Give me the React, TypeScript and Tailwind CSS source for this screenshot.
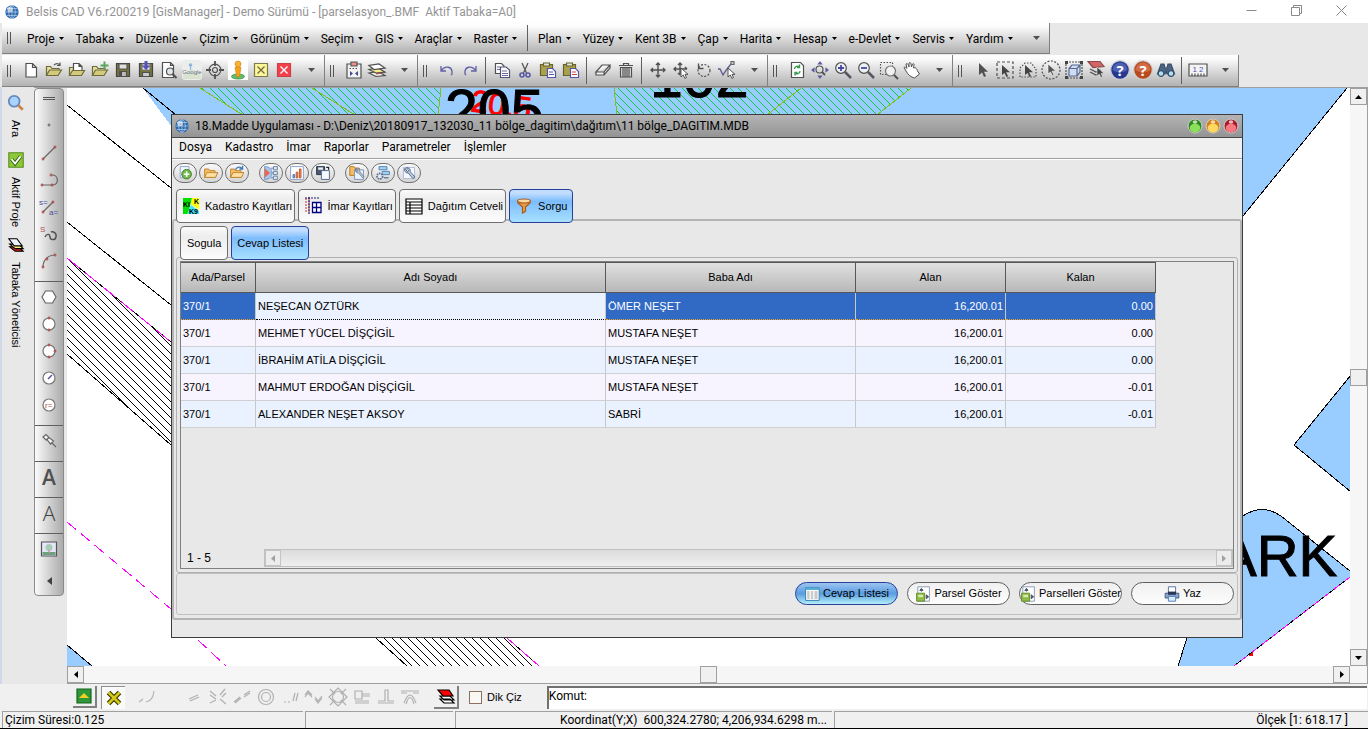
import type { ReactNode } from "react";

/* ---------- shared pieces ---------- */

function Ico({ children, stroke = "#505050", size = 20 }: { children: ReactNode; stroke?: string; size?: number }) {
  return (
    <svg width={size} height={size} viewBox="0 0 20 20" fill="none" stroke={stroke} strokeWidth="1.2" className="shrink-0 overflow-visible" aria-hidden="true">
      {children}
    </svg>
  );
}

function Arrow({ className = "" }: { className?: string }) {
  return (
    <svg width="5" height="3" viewBox="0 0 5 3" className={className} aria-hidden="true">
      <path d="M0 0h5L2.5 3z" fill="currentColor" />
    </svg>
  );
}

function Grip() {
  return (
    <div className="flex w-[17px] shrink-0 items-center pl-[5px]">
      <div className="h-3 w-1 border-x border-[#555]" />
    </div>
  );
}

function Globe({ size = 14 }: { size?: number }) {
  return (
    <svg width={size} height={size} viewBox="0 0 14 14" className="shrink-0" aria-hidden="true">
      <circle cx="7" cy="7" r="6.7" fill="#2f68ac" />
      <path d="M7 .5v13M.5 7h13M2 3.500h10M2 10.500h10" stroke="#b8d4ee" strokeWidth=".7" />
      <ellipse cx="7" cy="7" rx="3.300" ry="6.400" fill="none" stroke="#b8d4ee" strokeWidth=".7" />
      <circle cx="5" cy="4.500" r="2.800" fill="#fff" opacity=".6" />
    </svg>
  );
}

const folder = (
  <>
    <path d="M2.500 15.500v-9h4l1.500 2h7v2" fill="#e6dfa0" stroke="#6e6a3c" />
    <path d="M2.500 15.500l3-5.500h12l-3.500 5.500z" fill="#d2cb7c" stroke="#6e6a3c" />
  </>
);

const cursor = <path d="M7 3v12l3-2.600 2 4.600 2-1-2-4.300h4z" fill="#505050" stroke="none" />;

const smallCursor = <path d="M10 7v9l2.300-2 1.600 3.400 1.600-.8-1.500-3.200h3z" fill="#444" stroke="#eee" strokeWidth=".5" />;

const helpBall = (a: string, b: string) => (
  <>
    <circle cx="10" cy="10" r="9.300" fill={a} stroke="#cfcfd6" strokeWidth="1.200" />
    <path d="M2.500 10a7.500 7.500 0 0 1 15 0c-4 3-11 3-15 0" fill={b} stroke="none" />
    <text x="10" y="15.500" fontSize="15" fontWeight="700" textAnchor="middle" fill="#fff" stroke="none" fontFamily="Open Sans, sans-serif">?</text>
  </>
);

/* ---------- main toolbar ---------- */

type Tool = { name: string; art: ReactNode };
type Group = (Tool | "sep")[];

const fileTools: Group = [
  { name: "Yeni", art: <path d="M5 3.500h6.500l4 4v9.500H5zM11.500 3.500v4h4" fill="#fff" /> },
  { name: "Aç", art: <>{folder}<path d="M10 5c2-2 4-2 6 0m0-2.500v3h-3" stroke="#555" /></> },
  { name: "Proje aç", art: <><path d="M2.500 15.500v-8h4v8" fill="#e6dfa0" stroke="#6e6a3c" /><path d="M6.500 3.500h5.500l3 3v6H6.500zM12 3.500v3h3" fill="#fff" /><path d="M2.500 15.500l3-5h12l-3 5z" fill="#d2cb7c" stroke="#6e6a3c" /></> },
  { name: "Ekle", art: <>{folder}<path d="M14.500 1.500v8m-4-4h8" stroke="#58a55c" strokeWidth="2" /></> },
  { name: "Kaydet", art: <><path d="M3.500 3.500h13v13h-13z" fill="#77743a" stroke="#444" /><path d="M6 4h8v5H6z" fill="#dfdfdf" stroke="#555" /><path d="M6.500 11.500h7v5h-7z" fill="#bbb" /><path d="M8 12v4" strokeWidth="2" /></> },
  { name: "Farklı kaydet", art: <><path d="M3.500 3.500h13v13h-13z" fill="#77743a" stroke="#444" /><path d="M6 4h8v6H6z" fill="#eee" stroke="#777" /><path d="M10 1v5" stroke="#5454b4" strokeWidth="3" /><path d="M5.500 5.500h9L10 10z" fill="#5454b4" stroke="none" /><path d="M6.500 12.500h7v4h-7z" fill="#ccc" /></> },
  { name: "Önizleme", art: <><path d="M3.500 2.500h8l3 3v12h-11zM11.500 2.500v3h3" fill="#fff" /><circle cx="11" cy="11.500" r="3.500" fill="#dfe7ec" /><path d="M13.500 14l4 4" strokeWidth="2.200" /></> },
  { name: "Google", art: <><rect x="0" y="0" width="20" height="20" rx="3" fill="#eceeec" stroke="none" /><circle cx="8.500" cy="5" r="1.800" fill="#8eb6e0" stroke="none" /><path d="M8.500 6v4" stroke="#8eb6e0" /><path d="M1 14l9-5 9 6v4H1z" fill="#d9e3d0" stroke="none" /><text x="10" y="14" fontSize="6" textAnchor="middle" fill="#687488" stroke="none" fontFamily="Liberation Sans, sans-serif">Google</text></> },
  { name: "Hedef", art: <><circle cx="10" cy="10" r="5.800" /><circle cx="10" cy="10" r="2.500" /><path d="M10 1v5M10 14v5M1 10h5M14 10h5" strokeWidth="1.800" /></> },
  { name: "Sokak görünümü", art: <><path d="M0 0h20v20H0z" fill="#fff" stroke="none" /><ellipse cx="10" cy="16.500" rx="6.500" ry="2.500" fill="#66bb6a" stroke="#388e3c" strokeWidth=".8" /><path d="M7 7.500q3-2 6 0l-.8 5H12l-.5 4h-3l-.5-4z" fill="#f5a31c" stroke="#c87f10" strokeWidth=".6" /><circle cx="10" cy="4" r="3" fill="#f9b234" stroke="#c87f10" strokeWidth=".6" /></> },
  { name: "Kapat", art: <><path d="M3.500 3.500h13v13h-13z" fill="#fbf79a" stroke="#7d7a4c" /><path d="M6.500 6.500l7 7m0-7l-7 7" stroke="#6d6a3c" /></> },
  { name: "Tümünü kapat", art: <><path d="M3.500 3.500h13v13h-13z" fill="#f43f4b" stroke="#c9414a" /><path d="M6.500 6.500l7 7m0-7l-7 7" stroke="#fff" strokeWidth="1.400" /></> },
];

const layerTools: Group = [
  { name: "Pano", art: <><path d="M3 4h14v14H3z" fill="#f2f2f2" /><path d="M7 2h6v4H7z" fill="#e88c8c" stroke="#555" /><path d="M5.500 8.500h9" strokeDasharray="1.500 1.500" /><path d="M6 11v5l3-2.500zM14 11v5l-3-2.500z" fill="#444a90" stroke="none" /></> },
  { name: "Tabakalar", art: <><path d="M2 13l7 3.500 9-1-7-4z" fill="#eee" /><path d="M9 12l9-1v2l-9 1.500z" fill="#cf5050" stroke="none" /><path d="M2 9.500l7 3.500 9-1-7-4z" fill="#f3ec8c" /><path d="M2 5.500l5 4 11-1.500-6-4z" fill="#fff" /></> },
];

const paste = (c: string) => (
  <>
    <path d="M2.500 4.500h12v11h-12z" fill="#a9a14d" stroke="#66622c" />
    <path d="M5.500 3h6v3h-6z" fill="#e6e6d8" stroke="#66622c" />
    <path d="M9.500 8.500h5l3 3v6h-8z" fill="#fff" stroke="#5555a8" />
    <path d="M11 12h4M11 14.500h5" stroke={c} />
  </>
);

const editTools: Group = [
  { name: "Geri al", art: <path d="M4 6v5h5M4 11c4-6 12-5 11 3l-1 1" stroke="#6060a8" strokeWidth="1.300" /> },
  { name: "Yinele", art: <path d="M16 6v5h-5M16 11c-4-6-12-5-11 3l1 1" stroke="#6060a8" strokeWidth="1.300" /> },
  "sep",
  { name: "Kopyala", art: <><path d="M3.500 3.500h6l2.500 2.500v7.500H3.500z" fill="#fff" /><path d="M8.500 7h5.500l3.500 3v7.500h-9z" fill="#fff" stroke="#50507c" /><path d="M5 7h3M5 9.500h3M10 11h5M10 13.500h6M10 15.500h6" stroke="#55558c" strokeWidth=".9" /></> },
  { name: "Kes", art: <><path d="M7 3l4.500 10M13 3L8.500 13" /><circle cx="7" cy="15" r="2" stroke="#5858a4" strokeWidth="1.600" /><circle cx="13" cy="15" r="2" stroke="#5858a4" strokeWidth="1.600" /></> },
  { name: "Yapıştır", art: paste("#5555a8") },
  { name: "Özel yapıştır", art: paste("#c84848") },
  "sep",
  { name: "Sil", art: <path d="M3 12l6-7h8l-6 7zM3 12v3h8l6-7V5M11 12v3" fill="#f4f4f4" /> },
  { name: "Çöp", art: <><path d="M3 5.500h14M7.500 5V3.500h5V5M4.500 7.500h11v9.500h-11z" fill="#ddd" /><path d="M7 8v9M9 8v9M11 8v9M13 8v9" /></> },
  "sep",
  { name: "Taşı", art: <path d="M10 3v14M3 10h14M8 5l2-2 2 2M8 15l2 2 2-2M5 8l-2 2 2 2M15 8l2 2-2 2" strokeWidth="1.400" /> },
  { name: "Seçerek taşı", art: <><path d="M9 3v12M3 9h13M7 5l2-2 2 2M5 7L3 9l2 2M14 7l2 2M7 13l2 2" strokeWidth="1.400" /><path d="M10 8v9l2.300-2 1.600 3.400 1.600-.8-1.500-3.200h3z" fill="#fff" stroke="#444" strokeWidth=".9" /></> },
  { name: "Döndür", art: <><circle cx="10" cy="10.500" r="6" strokeDasharray="2 1.500" /><path d="M4.500 3.500v5h5" strokeWidth="1.300" /></> },
  { name: "Düzenle", art: <><path d="M1 9h2l3 6c2-3 5-8 9-12" stroke="#5a5a90" strokeWidth="1.300" /><path d="M14 1.500h3v3h-3z" fill="#ccc" stroke="#666" /><path d="M11 8v9l2.300-2 1.600 3.400 1.600-.8-1.500-3.200h3z" fill="#fff" stroke="#444" strokeWidth=".9" /></> },
];

const lens = (inner: ReactNode) => (
  <>
    <circle cx="8" cy="8" r="5.300" fill="#eef2f6" />
    <path d="M12 12l6 6" stroke="#5a5560" strokeWidth="2.500" />
    {inner}
  </>
);

const viewTools: Group = [
  { name: "Yenile", art: <><path d="M4.500 2.500h9l3 3v12h-12z" fill="#fff" /><path d="M7.500 9c0-3 3.500-3.500 5-2m0-2.500v3H10M13 11c0 3-3.500 3.500-5 2m0 2.500v-3h2.500" stroke="#3b9a54" strokeWidth="1.400" /></> },
  { name: "Kaydır", art: <><path d="M10 2l1.500 2h-3zM10 18l1.500-2h-3zM2 10l2-1.500v3zM18 10l-2-1.500v3z" fill="#5c5ca4" stroke="#5c5ca4" /><circle cx="9.500" cy="9.500" r="3.500" /><path d="M12 12l3 3" strokeWidth="1.800" /></> },
  { name: "Yakınlaş", art: lens(<path d="M8 5v6M5 8h6" stroke="#4949a0" strokeWidth="1.800" />) },
  { name: "Uzaklaş", art: lens(<path d="M5 8h6" stroke="#4949a0" strokeWidth="1.800" />) },
  { name: "Pencere", art: <><path d="M1.500 2.500h12v12h-12z" strokeDasharray="1.500 1.500" /><circle cx="11.500" cy="11" r="5" fill="#f1f1f1" stroke="#777" /><path d="M15 15l4 4" strokeWidth="2" /></> },
  { name: "El", art: <path d="M4 11L2 7.500c1-1 2 0 3 1L4 4c1-1 2 0 2.500 1.500L7 7V3c1-1 2 0 2 1l.5 3 1-3c1-.8 1.800 0 1.500 1.200L11.500 8c2-1 3.500 1 4 3l2 3-5 4C9 17 6 15 4 11z" fill="#fff" strokeWidth="1" /> },
];

const selectTools: Group = [
  { name: "Seç", art: cursor },
  { name: "Kutu seç", art: <><path d="M2 2h16v16H2z" strokeDasharray="3 2" /><path d="M7 5v10l2.500-2 2 4 1.600-.8-2-4H15z" fill="#444" stroke="none" /></> },
  { name: "Çokgen seç", art: <><path d="M2 17V8l5-5h6l5 6v8z" strokeDasharray="1.500 1.500" /><path d="M7 5v10l2.500-2 2 4 1.600-.8-2-4H15z" fill="#444" stroke="none" /></> },
  { name: "Daire seç", art: <><circle cx="10" cy="10" r="9" strokeDasharray="2 1.500" /><path d="M7 4v10l2.500-2 2 4 1.600-.8-2-4H15z" fill="#555" stroke="#fff" strokeWidth=".6" /></> },
  { name: "Nesne seç", art: <><path d="M2 2h16v16H2z" strokeDasharray="2 1" /><path d="M1 1h3v3H1zM16 1h3v3h-3zM1 16h3v3H1zM16 16h3v3h-3z" fill="#444" stroke="none" /><path d="M5 8.500h8V16H5zM5 8.500L8 5h8l-3 3.500M16 5v7l-3 4" fill="#cfdcf2" stroke="#566a92" /></> },
  { name: "Tabaka seç", art: <><path d="M3 9l6 3 5-2M3 12l6 3 5-2" /><path d="M1 1.500h12l4 5-11 1z" fill="#d46464" stroke="#8a4a4a" />{smallCursor}</> },
  { name: "Yardım", art: helpBall("#26388f", "#4f60b4") },
  { name: "Destek", art: helpBall("#b84a1c", "#d06b44") },
  { name: "Bul", art: <><path d="M5 4h3l1 4h2l1-4h3l3.500 10H11l-1-3-1 3H1.500z" fill="#4d6582" stroke="#37506e" /><circle cx="5" cy="13.500" r="2.800" fill="#b5dff0" stroke="#37506e" /><circle cx="15" cy="13.500" r="2.800" fill="#b5dff0" stroke="#37506e" /></> },
  "sep",
  { name: "Ölçek", art: <><path d="M1 4h18v12H1z" fill="#f4f4f4" /><text x="10" y="11.500" fontSize="8" textAnchor="middle" fill="#5050b0" stroke="none" fontFamily="Liberation Sans, sans-serif">1 2</text><path d="M4 16v-2.500M7 16v-2.500M10 16v-2.500M13 16v-2.500M16 16v-2.500" /></> },
];

const barFill = "bg-linear-to-b from-[#fdfdfd] from-10% to-[#b2b2b2]";

function ToolGroup({ tools }: { tools: Group }) {
  return (
    <div className={"flex h-8 border-r border-b border-[#808080] " + barFill}>
      <Grip />
      {tools.map((t, i) =>
        t === "sep" ? (
          <div key={i} className="flex w-[9px] justify-center py-[2px]">
            <div className="w-px bg-[#606060]" />
          </div>
        ) : (
          <button key={i} type="button" aria-label={t.name} className="flex w-[23px] items-center justify-center pb-px">
            <Ico>{t.art}</Ico>
          </button>
        ),
      )}
      <button type="button" aria-label="Diğer" className="flex w-[29px] items-center justify-center pb-px pl-1 text-[#505050]">
        <svg width="7" height="4" viewBox="0 0 7 4" aria-hidden="true"><path d="M0 0h7L3.500 4z" fill="currentColor" /></svg>
      </button>
    </div>
  );
}

const menuLeft = ["Proje", "Tabaka", "Düzenle", "Çizim", "Görünüm", "Seçim", "GIS", "Araçlar", "Raster"];
const menuRight = ["Plan", "Yüzey", "Kent 3B", "Çap", "Harita", "Hesap", "e-Devlet", "Servis", "Yardım"];

function MenuItem({ label }: { label: string }) {
  return (
    <button type="button" className="flex items-center gap-1 px-[6px] pt-px whitespace-nowrap">
      {label}
      <Arrow />
    </button>
  );
}

/* ---------- left column ---------- */

const dot = (x: number, y: number) => <path d={`M${x - 1.5} ${y}h3M${x} ${y - 1.5}v3`} stroke="#b04848" />;

const tag = (x: number, y: number, fill: string, s: string) => (
  <text x={x} y={y} fontSize="8" fill={fill} stroke="none" fontFamily="Liberation Sans, sans-serif">{s}</text>
);

const drawTools: ({ name: string; art: ReactNode } | "sep")[] = [
  { name: "Nokta", art: <path d="M8.500 9h3M10 7.500v3" stroke="#666" /> },
  { name: "Doğru", art: <><path d="M4 16L16 4" stroke="#666" />{dot(4, 16)}{dot(16, 4)}</> },
  { name: "Çoklu doğru", art: <><path d="M3 15h11c6 0 6-10-1-10" stroke="#666" />{dot(3, 15)}{dot(13, 15)}{dot(12, 5)}</> },
  { name: "Açı mesafe", art: <><path d="M4 15L14 5" stroke="#666" />{dot(4, 15)}{dot(14, 5)}{tag(0, 8, "#4c4c9c", "s=")}{tag(10, 18, "#4c4c9c", "a=")}</> },
  { name: "Eğri", art: <><path d="M6 13c2-4 5-3 5 0s5 4 6 0-3-6-5-5" strokeWidth="1.400" />{tag(1, 8, "#b04848", "S")}</> },
  { name: "Yay", art: <><path d="M4 16C4 9 9 4 16 4" stroke="#666" />{dot(4, 16)}{dot(8, 8)}{dot(16, 4)}</> },
  "sep",
  { name: "Çokgen", art: <path d="M6.500 4h7l3.500 6-3.500 6h-7L3 10z" fill="#fff" stroke="#666" /> },
  { name: "Daire", art: <><circle cx="10" cy="10" r="6" fill="#fff" stroke="#777" />{dot(10, 4)}{dot(10, 16)}</> },
  { name: "Üç nokta daire", art: <><circle cx="10" cy="10" r="6" fill="#fff" stroke="#777" />{dot(10, 4)}{dot(16, 10)}{dot(10, 16)}</> },
  { name: "Merkez daire", art: <><circle cx="10" cy="10" r="6" fill="#fff" stroke="#777" /><path d="M9 11l4-4" stroke="#5050a0" strokeWidth="1.500" /></> },
  { name: "Yarıçap daire", art: <><circle cx="10" cy="10" r="6" fill="#fff" stroke="#777" />{tag(6, 13, "#b04848", "r=")}</> },
  "sep",
  { name: "Raptiye", art: <path d="M4 6l3-2.500 3 3-3 2.500zM8 8.500l2-2 4.500 3.500-3 3zM13 12l4 4" fill="#f4f4f4" stroke="#666" /> },
  "sep",
  { name: "Kalın yazı", art: <span className="font-['Open_Sans',sans-serif] text-[21px] leading-6 font-semibold text-[#505050]">A</span> },
  "sep",
  { name: "Yazı", art: <span className="font-['Open_Sans',sans-serif] text-[21px] leading-6 font-light text-[#404040]">A</span> },
  "sep",
  { name: "Resim", art: <><path d="M2.500 3h15v14h-15z" fill="#e4e6fa" stroke="#555" /><path d="M3.500 13h13v3h-13z" fill="#6ca37c" stroke="none" /><circle cx="10" cy="8.500" r="3.500" fill="#a9cdb4" stroke="none" /><path d="M10 11v3" stroke="#d4849c" /></> },
];

const letterTools = ["Kalın yazı", "Yazı"];

function SideTab({ label, icon, className }: { label: string; icon: ReactNode; className: string }) {
  return (
    <button type="button" className={"flex w-full flex-col items-center gap-2 " + className}>
      {icon}
      <span className="font-['Liberation_Sans',sans-serif] text-[11px] leading-4 [writing-mode:vertical-rl]">{label}</span>
    </button>
  );
}

function DrawColumn() {
  return (
    <div className="flex w-[30px] flex-col rounded-[4px] border border-[#8a8a8a] bg-linear-to-r from-[#fbfbfb] to-[#ababab] pb-[10px]">
      <div className="flex h-[23px] items-start justify-center pt-2">
        <div className="h-[3px] w-3 border-y border-[#555]" />
      </div>
      {drawTools.map((t, i) =>
        t === "sep" ? (
          <div key={i} className="flex h-[9px] items-end pb-px">
            <div className="h-px w-full bg-[#606060]" />
          </div>
        ) : (
          <button key={i} type="button" aria-label={t.name} className="flex h-[27px] items-center justify-center">
            {letterTools.includes(t.name) ? t.art : <Ico>{t.art}</Ico>}
          </button>
        ),
      )}
      <button type="button" aria-label="Daralt" className="flex h-[23px] items-end justify-center pl-px">
        <svg width="5" height="8" viewBox="0 0 5 8" aria-hidden="true"><path d="M5 0v8L0 4z" fill="#404040" /></svg>
      </button>
    </div>
  );
}

/* ---------- map ---------- */

const range = (n: number) => Array.from({ length: n }, (_, i) => i);

function MapDrawing() {
  return (
    <svg className="absolute inset-0 h-full w-full" viewBox="67 88 1283 578" preserveAspectRatio="xMinYMin slice" shapeRendering="crispEdges" fill="none" stroke="#000" fontFamily="Liberation Sans, sans-serif" aria-hidden="true">
      <defs>
        <clipPath id="road"><path d="M67 258L171 342V445L67 354z" /></clipPath>
        <clipPath id="roadSouth"><path d="M376 638H507L539 666H407z" /></clipPath>
        <clipPath id="parcelA"><path d="M200 88H441L438 115H243z" /></clipPath>
        <clipPath id="parcelB"><path d="M614 88H911L877 115H617z" /></clipPath>
      </defs>
      <path d="M143 88H1347L1243 216V300H300z" fill="#99ccff" stroke="none" />
      <path d="M143 88L176 115M1347 88L1243 216M67 105L171 188M67 222L171 305" />
      <g stroke="#12c83c" clipPath="url(#parcelA)">{range(36).map((i) => <path key={i} d={`M${170 + i * 8} 88l30 30`} />)}</g>
      <g stroke="#12c83c" clipPath="url(#parcelB)">{range(42).map((i) => <path key={i} d={`M${586 + i * 8} 88l30 30`} />)}</g>
      <path d="M200 88L243 115M312 88L355 115M441 88L438 115M614 88L617 115M801 88L767 115M911 88L877 115" stroke="#80c010" />
      <g clipPath="url(#road)">{range(26).map((i) => <path key={i} d={`M67 ${162 + i * 8}l104 104`} />)}</g>
      <path d="M67 258L171 342M67 354L171 445" />
      <path d="M67 258L171 342" stroke="#ff00ff" strokeDasharray="16 7" />
      <g clipPath="url(#roadSouth)">{range(24).map((i) => <path key={i} d={`M${352 + i * 8} 638l30 30`} />)}</g>
      <path d="M376 638L407 666M507 638L539 666" />
      <path d="M507 638L539 666" stroke="#ff00ff" strokeDasharray="12 5" />
      <path d="M67 522L171 609M198 640L226 666" stroke="#ff00ff" strokeDasharray="12 6" />
      <path d="M67 645L92 666H67z" fill="#99ccff" stroke="none" />
      <path d="M67 645L92 666" />
      <path d="M1351 375L1294 445L1351 492" fill="#99ccff" />
      <path d="M1178 666L1187 638L1243 516Q1262 503 1281 516L1350 571V577L1234 666z" fill="#99ccff" stroke="none" />
      <path d="M1178 666L1187 638M1243 516Q1262 503 1281 516L1350 571M1350 577L1234 666" />
      <path d="M1350 577L1234 666" stroke="#ff00ff" strokeDasharray="7 6" />
      <path d="M1248 656l5-4v4z" fill="#f00" stroke="none" />
      <g stroke="none">
        <text x="470" y="111" fontSize="31" fill="#f00" stroke="#f00" transform="rotate(8 470 111)">20.5</text>
        <text x="445" y="131" fontSize="59" fill="#000" stroke="#000">205</text>
        <text x="650" y="97" fontSize="59" fill="#000" stroke="#000">102</text>
        <text x="1218" y="576" fontSize="58" fill="#000" stroke="#000">ARK</text>
      </g>
    </svg>
  );
}

const scrollBtn = "flex size-[17px] shrink-0 items-center justify-center border border-[#a0a0a0] bg-[#f0f0f0]";
const tri = { up: "M0 4h7L3.500 0z", down: "M0 0h7L3.500 4z", left: "M4 0v7L0 3.500z", right: "M0 0v7L4 3.500z" };

function ScrollArrow({ dir, soft = false }: { dir: keyof typeof tri; soft?: boolean }) {
  return (
    <button type="button" aria-label={dir} className={soft ? "flex size-4 shrink-0 items-center justify-center border border-[#c4c4c4] bg-[#ececec]" : scrollBtn}>
      <svg width={dir === "up" || dir === "down" ? 7 : 4} height={dir === "up" || dir === "down" ? 4 : 7} aria-hidden="true">
        <path d={tri[dir]} fill={soft ? "#a0a0a0" : "#000"} />
      </svg>
    </button>
  );
}

/* ---------- dialog ---------- */

const rows = [
  ["370/1", "NEŞECAN ÖZTÜRK", "ÖMER NEŞET", "16,200.01", "0.00"],
  ["370/1", "MEHMET YÜCEL DİŞÇİGİL", "MUSTAFA NEŞET", "16,200.01", "0.00"],
  ["370/1", "İBRAHİM ATİLA DİŞÇİGİL", "MUSTAFA NEŞET", "16,200.01", "0.00"],
  ["370/1", "MAHMUT ERDOĞAN DİŞÇİGİL", "MUSTAFA NEŞET", "16,200.01", "-0.01"],
  ["370/1", "ALEXANDER NEŞET AKSOY", "SABRİ", "16,200.01", "-0.01"],
];

const wrench = <path d="M8 5a4 4 0 0 0 4 5l5 6 1.500-1.500-5-6a4 4 0 0 0-5-4.500l2.500 2.500-1 2z" fill="#c3cddb" stroke="#54688a" strokeWidth=".9" />;
const orangeFolder = <path d="M2 15.500V5h5l1.500 2H15v2.500h3l-2.500 6z" fill="#f6bc62" stroke="#b87820" strokeWidth="1" />;
const folderFlap = <path d="M2 15.500l3-6h13.500l-3 6z" fill="#fde0a4" stroke="#b87820" strokeWidth="1" />;

const dialogTools: { name: string; art: ReactNode }[][] = [
  [
    { name: "Yeni", art: <><path d="M4 2h11v14H4z" fill="#f3f7ff" stroke="#8da2cc" /><circle cx="12" cy="11.500" r="6" fill="#72b84c" stroke="#3f7f26" /><path d="M12 8v7M8.500 11.500h7" stroke="#fff" strokeWidth="2" /></> },
    { name: "Aç", art: <>{orangeFolder}{folderFlap}</> },
    { name: "Farklı aç", art: <>{orangeFolder}{folderFlap}<path d="M8 6c2-4 6-4 8-2m1-3v4h-4" stroke="#3f78b8" strokeWidth="1.600" /></> },
  ],
  [
    { name: "Ağaç", art: <><path d="M2 2c6 0 9 3 9 8s-3 8-9 8z" fill="#a9c8ec" stroke="#6f9cd0" /><path d="M2 4l7 6-7 6z" fill="#e86850" stroke="none" /><path d="M13 2h5v4h-5zM13 8h5v4h-5zM13 14h5v4h-5zM10 4h3M11 10h2M10 16h3" fill="#dfe8f4" stroke="#6b83a8" /></> },
    { name: "Grafik", art: <><path d="M2 2h16v16H2z" fill="#fff" stroke="#8da2cc" /><path d="M5 12h2v4H5z" fill="#7aa8dc" stroke="#4a78b8" /><path d="M9 9h2v7H9zM13 5h2v11h-2z" fill="#f4a06c" stroke="#c05020" /></> },
    { name: "Kaydet", art: <><path d="M2 2h10v10H2z" fill="#4b5a70" stroke="#2b3648" /><path d="M4 3h6v3H4z" fill="#e8eef6" stroke="none" /><path d="M8 7h10v11H8z" fill="#f6f9ff" stroke="#54688a" /><path d="M14 3h3v3" stroke="#222" strokeWidth="1.600" /></> },
  ],
  [
    { name: "Klasör ayar", art: <><path d="M1 13V2h5l1.500 2H13v9z" fill="#f6bc62" stroke="#b87820" /><path d="M7 6h11v12H7z" fill="#eef3fb" stroke="#7d93b8" />{wrench}</> },
    { name: "Akış ayar", art: <><path d="M5 2h10v4H5zM9 8h9v4H9z" fill="#a8d0ec" stroke="#4a88b8" /><circle cx="6" cy="14" r="3.500" fill="#e0e6ee" stroke="#54688a" strokeWidth="2" strokeDasharray="2 1" /><path d="M11 16h6" stroke="#54688a" strokeWidth="1.500" /></> },
    { name: "Ayarlar", art: <><path d="M3 3h14v14H3z" fill="#f3f7ff" stroke="#aab8d4" /><path d="M5 4a4 4 0 0 0 4 6l6 7 2.500-2-6-6.500a4 4 0 0 0-5-5l3 3-1.200 2.500z" fill="#c3cddb" stroke="#54688a" /></> },
  ],
];

const tabs: { label: string; art: ReactNode; on?: boolean }[] = [
  { label: "Kadastro Kayıtları", art: <><path d="M2 2h9L7 18H2z" fill="#00e000" stroke="none" /><path d="M11 2h7v12L10 8z" fill="#ffff00" stroke="none" /><path d="M10 9l8 6v3H6z" fill="#40e8f8" stroke="none" /><g fill="#000" stroke="none" fontSize="7" fontWeight="700"><text x="2" y="11">KI</text><text x="13" y="8">K</text><text x="8" y="18">K9</text></g></> },
  { label: "İmar Kayıtları", art: <><path d="M2 3h6M2 6h6M2 9h6M2 12h6M2 15h6" stroke="#c03030" strokeDasharray="2 1" /><path d="M6 1v17M2 2h15" stroke="#202070" strokeDasharray="2 1" /><path d="M9.500 6.500h8.500v10h-8.500zM9.500 11.500h8.500M13.500 6v10" fill="#fff" stroke="#000080" strokeWidth="1.300" /></> },
  { label: "Dağıtım Cetveli", art: <path d="M2 3h16v15H2zM2 6h16M2 9h16M2 12h16M2 15h16M6 6v12" fill="#fff" stroke="#000" /> },
  { label: "Sorgu", art: <><path d="M4 5h12v2l-4.500 4v4.500L8.500 17v-6L4 7z" fill="#e89a4c" stroke="#a85c18" /><ellipse cx="10" cy="5" rx="6.500" ry="2" fill="#fbd7a4" stroke="#a85c18" /></>, on: true },
];

const tabOff = "border-[#6e6e6e] bg-linear-to-b from-[#fafafa] via-[#ededed] via-30% to-[#fcfcfc]";
const tabOn = "border-[#28409c] bg-linear-to-b from-[#c2deff] from-10% via-[#7cbcfc] via-35% to-[#a8e0ff]";

const tableIcon = <><path d="M2 2h17v16H2z" fill="#fff" stroke="#3480b0" /><path d="M2 2h17v3H2z" fill="#58b0d8" stroke="none" /><path d="M4 7.500h3M8.500 7.500h3M13 7.500h4M4 10h3M8.500 10h3M13 10h4M4 12.500h3M8.500 12.500h3M13 12.500h4M4 15h3M8.500 15h3M13 15h4" stroke="#909090" /></>;
const showIcon = <><path d="M3.500 1h14.500v18H3.500z" fill="#fff" stroke="#8c9cb8" /><path d="M2 9h10v10H2z" fill="#8fbb48" stroke="#688c30" /><path d="M4 11h6v3H4z" fill="#d8ecb0" stroke="none" /><path d="M8 7V5M6 5.500L8 3l2 2.500zM14 11l3 2.500-3 2.500z" stroke="#44546c" fill="#44546c" /></>;
const printIcon = <><path d="M5.500 1h9v8h-9z" fill="#fff" stroke="#5870a4" /><path d="M1.500 9h17v6h-17z" fill="#8fa4cc" stroke="#40588c" /><path d="M5 7h10v4H5z" fill="#283858" stroke="none" /><path d="M5.500 13h9v6h-9z" fill="#d8ecff" stroke="#5880b8" /></>;

const actions = [
  { label: "Cevap Listesi", art: tableIcon, on: true },
  { label: "Parsel Göster", art: showIcon },
  { label: "Parselleri Göster", art: showIcon },
  { label: "Yaz", art: printIcon },
];

function Orb({ from, to, label }: { from: string; to: string; label: string }) {
  return (
    <button type="button" aria-label={label} className="flex">
      <svg width="16" height="16" viewBox="0 0 16 16" aria-hidden="true">
        <circle cx="8" cy="8" r="7" fill={from} stroke="#d0d0d0" strokeWidth="1" />
        <ellipse cx="8" cy="10" rx="5.300" ry="4.200" fill={to} />
        <ellipse cx="8" cy="4" rx="2.300" ry="1.800" fill="#fff" opacity=".7" />
      </svg>
    </button>
  );
}

function Dialog() {
  const head = ["Ada/Parsel", "Adı Soyadı", "Baba Adı", "Alan", "Kalan"];
  return (
    <section aria-label="18.Madde Uygulaması" className="absolute top-[26px] right-[107px] bottom-[28px] left-[104px] flex flex-col border border-[#3c3c3c] bg-[#e8e8e8]">
      <header className="flex h-[23px] shrink-0 items-center gap-[6px] border-b border-[#484848] bg-linear-to-b from-[#b4b4b4] to-[#949494] pr-[3px] pl-[3px]">
        <Globe />
        <h2 className="grow whitespace-nowrap">18.Madde Uygulaması - D:\Deniz\20180917_132030_11 bölge_dagitim\dağıtım\11 bölge_DAGITIM.MDB</h2>
        <div className="flex gap-[2px]">
          <Orb label="Küçült" from="#2f8a1c" to="#8ce05c" />
          <Orb label="Büyüt" from="#d88014" to="#ffd860" />
          <Orb label="Kapat" from="#a81824" to="#f87880" />
        </div>
      </header>
      <nav className="flex h-[21px] shrink-0 items-center gap-[13px] border-b border-[#a0a0a0] bg-[#f0f0f0] pb-[2px] pl-[7px]">
        {["Dosya", "Kadastro", "İmar", "Raporlar", "Parametreler", "İşlemler"].map((m) => (
          <button key={m} type="button">{m}</button>
        ))}
      </nav>
      <div className="flex h-[30px] shrink-0 items-center gap-[10px] border-t border-white px-px pb-[4px]">
        {dialogTools.map((g, i) => (
          <div key={i} className="flex gap-[2px]">
            {g.map((t) => (
              <button key={t.name} type="button" aria-label={t.name} className="flex h-5 w-6 items-center justify-center rounded-full border border-[#707070] bg-linear-to-b from-[#fafafa] to-[#d4d4d4]">
                <Ico size={16}>{t.art}</Ico>
              </button>
            ))}
          </div>
        ))}
      </div>

      <div className="z-10 flex shrink-0 gap-[3px] pl-1 font-['Liberation_Sans',sans-serif] text-[11px]">
        {tabs.map((t) => (
          <button key={t.label} type="button" className={"flex h-[34px] items-center gap-1 rounded-[4px] border py-0 pl-1 whitespace-nowrap " + (t.on ? "pr-[5px] " + tabOn : "pr-[2px] " + tabOff)}>
            <Ico>{t.art}</Ico>
            {t.label}
          </button>
        ))}
      </div>

      <div className="-mt-[4px] flex min-h-0 grow flex-col rounded-[3px] border-2 border-[#b4b4b4] px-[2px] pt-[5px] font-['Liberation_Sans',sans-serif] text-[11px]">
        <div className="z-10 flex shrink-0 gap-[3px] pl-1">
          <button type="button" className={"h-[34px] rounded-[4px] border px-[6px] " + tabOff}>Sogula</button>
          <button type="button" className={"h-[34px] rounded-[4px] border px-[5px] " + tabOn}>Cevap Listesi</button>
        </div>
        <div className="-mt-[3px] flex min-h-0 grow flex-col rounded-[3px] border border-[#b0b0b0] p-[3px]">
          <div className="flex min-h-0 grow flex-col border border-[#808080]">
            <div className="min-h-0 grow overflow-hidden">
              <table className="w-[975px] table-fixed border-separate border-spacing-0">
                <colgroup>
                  <col className="w-[75px]" />
                  <col className="w-[350px]" />
                  <col className="w-[250px]" />
                  <col className="w-[150px]" />
                  <col className="w-[150px]" />
                </colgroup>
                <thead>
                  <tr>
                    {head.map((h) => (
                      <th key={h} scope="col" className="h-[31px] border-t border-r border-b border-[#585858] bg-linear-to-b from-[#e0e0e0] to-[#b8b8b8] p-0 font-normal">{h}</th>
                    ))}
                  </tr>
                </thead>
                <tbody>
                  {rows.map((r, i) => (
                    <tr key={i} className={i % 2 ? "bg-[#f8f4ff]" : "bg-[#eaf2ff]"}>
                      {r.map((c, j) => (
                        <td
                          key={j}
                          className={
                            "h-[27px] border-r border-b border-r-[#c8c8c8] px-[2px] py-0 whitespace-nowrap " +
                            (j > 2 ? "text-right " : "") +
                            (i > 0 ? "border-b-[#d0d0d0]" : j === 1 ? "border-b-black [border-bottom-style:dotted]" : "border-b-[#f0a020] [border-bottom-style:dotted] bg-[#316ac5] text-white")
                          }
                        >
                          {c}
                        </td>
                      ))}
                    </tr>
                  ))}
                </tbody>
              </table>
            </div>
            <div className="flex h-[20px] shrink-0 items-center">
              <span className="w-[83px] pl-[6px] text-[12px]">1 - 5</span>
              <div className="flex h-[18px] grow justify-between border border-[#c0c0c0] bg-linear-to-b from-[#dcdcdc] to-[#efefef]">
                <ScrollArrow dir="left" soft />
                <ScrollArrow dir="right" soft />
              </div>
            </div>
          </div>
        </div>
        <div className="mb-[3px] flex h-[42px] shrink-0 items-center justify-end gap-[9px] rounded-[3px] border border-[#c0c0c0] pr-[3px] pb-px">
          {actions.map((a) => (
            <button
              key={a.label}
              type="button"
              className={
                "flex h-[23px] w-[103px] items-center justify-center gap-[3px] rounded-full border whitespace-nowrap " +
                (a.on ? "border-[#28409c] bg-linear-to-b from-[#9cc4f0] via-[#5a9ce0] to-[#b4f0f8]" : "border-[#606060] bg-linear-to-b from-[#f0f0f0] to-[#fdfdfd]")
              }
            >
              <Ico size={16}>{a.art}</Ico>
              {a.label}
            </button>
          ))}
        </div>
      </div>
      <div className="h-[17px] shrink-0" />
    </section>
  );
}

/* ---------- bottom strip ---------- */

const snapTools: { name: string; art: ReactNode }[] = [
  { name: "Uç", art: <path d="M5 12l9-4M6 14l9-4" /> },
  { name: "Kesişim", art: <path d="M2 4l6 5M2 8l6 4M12 8l5-6M14 10l4-4M2 16l6-3M12 12l6 5" /> },
  { name: "Orta", art: <path d="M2 15l6-5M3 16l6-5M12 8l6-4M12 10l6-4" /> },
  { name: "Merkez", art: <><circle cx="10" cy="10" r="7.500" /><circle cx="10" cy="10" r="4.500" /></> },
  { name: "En yakın", art: <path d="M4 15h2M8 15h2M13 14l2-8M16 14l2-8" /> },
  { name: "Tepe", art: <path d="M1 8l3-4 4 4M1 10l3-4 4 4M11 12l3 4 4-5M11 10l3 4 4-5" /> },
  { name: "Çeyrek", art: <><circle cx="10" cy="10" r="5.500" /><path d="M10 1l9 9-9 9-9-9zM2 2l5 5M13 13l5 5M18 2l-5 5M2 18l5-5" /></> },
  { name: "Blok", art: <path d="M3 4h7v8H3zM10 7h8M10 9h8M3 14h14M3 16h14" /> },
  { name: "Dik", art: <path d="M2 16h16M2 14h7V3h3v11h6" /> },
  { name: "Teğet", art: <path d="M1 4h18M1 6h6M13 6h6M4 16q6-16 12 0M6 17q4-13 8 0" /> },
];

function BottomBar() {
  return (
    <div className="flex h-[26px] shrink-0 items-center bg-[#f0f0f0] pr-px pl-[73px]">
      <button type="button" aria-label="Harita" className="flex h-[22px] w-[24px] items-center justify-center border-r-2 border-b-2 border-[#808080]">
        <Ico><path d="M3 3h14v14H3z" fill="#2e9838" stroke="#176420" /><path d="M5 12l5-5 5 5z" fill="#f4d020" stroke="none" /></Ico>
      </button>
      <button type="button" aria-label="Yakala" className="ml-[4px] flex h-[23px] w-[24px] items-center justify-center border-t border-l border-[#909090] bg-[#fafafa]">
        <Ico><path d="M4.500 4.500l11 11m0-11l-11 11" stroke="#3c3c00" strokeWidth="5" /><path d="M4.500 4.500l11 11m0-11l-11 11" stroke="#d4c818" strokeWidth="2.600" /></Ico>
      </button>
      <button type="button" aria-label="Yay" className="ml-3 flex">
        <Ico stroke="#b4b4b4"><path d="M2 15l4-3M9 15q7-1 8-11" /></Ico>
      </button>
      <div className="ml-[27px] flex gap-1">
        {snapTools.map((s) => (
          <button key={s.name} type="button" aria-label={s.name} className="flex">
            <Ico stroke="#b0b0b0">{s.art}</Ico>
          </button>
        ))}
      </div>
      <button type="button" aria-label="Tabaka" className="ml-[14px] flex h-[23px] w-[25px] items-center justify-center border-r-2 border-b-2 border-[#808080]">
        <Ico stroke="#000"><path d="M4 13l4 4h10l-4-4zM4 10l4 4h10l-4-4z" fill="#fff" /><path d="M2 4h11l4 6H7z" fill="#f00" /></Ico>
      </button>
      <label className="ml-[10px] flex items-center gap-[5px] font-['Liberation_Sans',sans-serif] text-[11px] whitespace-nowrap">
        <input type="checkbox" className="size-[13px] appearance-none border border-[#8c7060] bg-[#faf8f4]" />
        Dik Çiz
      </label>
      <div className="ml-[25px] flex h-[23px] grow items-start border-t-2 border-l-2 border-[#707070] bg-white">
        <label htmlFor="komut" className="leading-4">Komut:</label>
        <input id="komut" type="text" className="min-w-0 grow outline-none" />
      </div>
    </div>
  );
}

const panel = "h-[17px] overflow-hidden border-t border-l border-[#a0a0a0] leading-4 whitespace-nowrap";

export default function App() {
  return (
    <div className="flex h-screen min-h-[640px] flex-col overflow-hidden border-b border-black bg-[#e8e8e8] font-['Roboto','Noto_Sans',sans-serif] text-[12px] text-black">
      <header className="flex h-[23px] shrink-0 items-center gap-[7px] bg-white pr-1 pl-[5px] text-[#949494]">
        <Globe />
        <h1 className="grow whitespace-pre">Belsis CAD V6.r200219 [GisManager] - Demo Sürümü - [parselasyon_.BMF  Aktif Tabaka=A0]</h1>
        <div className="flex pb-[3px]">
          {["M.5 5.500h10", "M.5 2.500h8v8h-8zM2.500 2.500v-2h8v8h-2", "M.5.5l10 10m0-10l-10 10"].map((d, i) => (
            <button key={i} type="button" aria-label={["Küçült", "Önceki boyut", "Kapat"][i]} className="flex w-[45px] justify-center">
              <svg width="11" height="11" viewBox="0 0 11 11" fill="none" stroke="#8a8a8a" aria-hidden="true"><path d={d} /></svg>
            </button>
          ))}
        </div>
      </header>

      <nav className="mb-px flex shrink-0 pl-[2px]">
        <div className={"flex h-[31px] border-r border-b border-[#808080] " + barFill}>
          <Grip />
          <div className="flex pl-[2px]">{menuLeft.map((m) => <MenuItem key={m} label={m} />)}</div>
          <div className="mx-[4px] my-[2px] w-px bg-[#606060]" />
          {menuRight.map((m) => <MenuItem key={m} label={m} />)}
          <button type="button" aria-label="Diğer" className="flex w-[30px] items-center justify-center pl-[5px] text-[#505050]">
            <svg width="7" height="4" viewBox="0 0 7 4" aria-hidden="true"><path d="M0 0h7L3.500 4z" fill="currentColor" /></svg>
          </button>
        </div>
      </nav>

      <div className="flex shrink-0 pl-[2px]">
        <ToolGroup tools={fileTools} />
        <ToolGroup tools={layerTools} />
        <ToolGroup tools={editTools} />
        <ToolGroup tools={viewTools} />
        <ToolGroup tools={selectTools} />
      </div>

      <div className="flex min-h-0 grow border-l-2 border-[#cfd9ea]">
        <div className="flex w-[32px] shrink-0 flex-col pt-[7px] pr-[4px]">
          <SideTab
            label="Ara"
            className=""
            icon={<Ico size={18}><circle cx="8" cy="8" r="6" fill="#a8d4fc" stroke="#6888c0" strokeWidth="2" /><path d="M12.500 12.500l5 5" stroke="#c88448" strokeWidth="3" /></Ico>}
          />
          <SideTab
            label="Aktif Proje"
            className="mt-[14px]"
            icon={<Ico size={18}><path d="M2 2h16v16H2z" fill="#8cc838" stroke="#568c20" /><path d="M5 9l4 5 6-8" stroke="#305c10" strokeWidth="4" /><path d="M5 9l4 5 6-8" stroke="#fff" strokeWidth="2" /></Ico>}
          />
          <SideTab
            label="Tabaka Yöneticisi"
            className="mt-[9px]"
            icon={<Ico size={18} stroke="#000"><path d="M3 12l6 5h9l-5-5z" fill="#d02020" /><path d="M3 9l6 5h9l-5-5z" fill="#f8f080" /><path d="M2 3h9l6 8H8z" fill="#eef2ff" /></Ico>}
          />
        </div>
        <div className="flex w-[33px] shrink-0 items-start border-t border-[#a0a0a0]">
          <DrawColumn />
        </div>
        <main className="flex min-w-0 grow flex-col border-y border-r border-[#a0a0a0]">
          <div className="flex min-h-0 grow">
            <div className="relative min-w-0 grow overflow-hidden bg-white">
              <MapDrawing />
              <Dialog />
            </div>
            <div className="flex w-[17px] flex-col bg-[#f6f6f6]">
              <ScrollArrow dir="up" />
              <div className="flex grow flex-col justify-center"><div className={scrollBtn} /></div>
              <ScrollArrow dir="down" />
            </div>
          </div>
          <div className="flex h-[17px] shrink-0 bg-[#f6f6f6] pr-[17px]">
            <ScrollArrow dir="left" />
            <div className="flex grow justify-center"><div className={scrollBtn} /></div>
            <ScrollArrow dir="right" />
          </div>
        </main>
      </div>

      <BottomBar />

      <footer className="flex h-[18px] shrink-0 items-end gap-[2px] bg-[#f0f0f0] pl-[2px]">
        <div className={panel + " w-[301px] pl-[2px]"}>Çizim Süresi:0.125</div>
        <div className={panel + " w-[148px]"} />
        <div className={panel + " w-[377px] pr-[5px] text-right"}>Koordinat(Y;X)&nbsp; 600,324.2780; 4,206,934.6298 m...</div>
        <div className={panel + " grow pr-[20px] text-right"}>Ölçek [1: 618.17 ]</div>
      </footer>
    </div>
  );
}
